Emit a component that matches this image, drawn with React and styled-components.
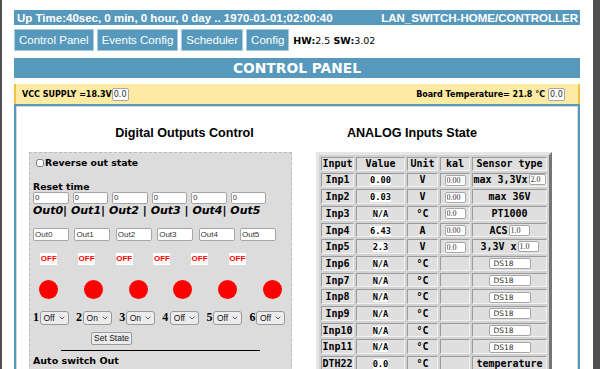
import React from "react";
import styled, { createGlobalStyle } from "styled-components";
import { ChevronDown } from "lucide-react";

const GlobalStyle = createGlobalStyle`
  html, body { margin: 0; padding: 0; background: #fff; }
  body { font-family: "DejaVu Sans", Verdana, sans-serif; color: #000; }
  * { box-sizing: border-box; }
`;

const BLUE = "#5799bc";

const Screen = styled.div`
  display: flex;
  width: 600px;
  height: 369px;
  overflow: hidden;
`;
const Edge = styled.div`
  flex: none;
  width: ${(p) => p.$w}px;
  background: #505050;
`;
const Page = styled.div`
  flex: 1;
  min-width: 0;
  padding: 10px 13px 0 12px;
`;

const TopBar = styled.div`
  display: flex;
  justify-content: space-between;
  align-items: center;
  height: 15px;
  padding: 0 2px 0 3px;
  background: ${BLUE};
  color: #fff;
  font: bold 11.5px "Liberation Sans", Arial, sans-serif;
  white-space: nowrap;
`;

const Nav = styled.div`
  display: flex;
  align-items: center;
  gap: 3px;
  margin-top: 4px;
  height: 22px;
`;
const NavButton = styled.a`
  display: flex;
  align-items: center;
  height: 22px;
  padding: 0 4px;
  background: ${BLUE};
  border: 1px solid #a9cce0;
  color: #fff;
  font: 11.5px "Liberation Sans", Arial, sans-serif;
  white-space: nowrap;
`;
const Version = styled.span`
  margin-left: 1px;
  font-size: 9.5px;
  b { font-weight: bold; }
`;

const TitleBar = styled.div`
  margin-top: 7px;
  height: 20px;
  background: ${BLUE};
  color: #fff;
  text-align: center;
  font: bold 13.8px/20px "DejaVu Sans", Verdana, sans-serif;
`;

const SupplyBar = styled.div`
  display: flex;
  justify-content: space-between;
  align-items: center;
  margin-top: 6px;
  height: 20px;
  padding: 0 13px 0 6px;
  background: #feeba3;
  border-left: 2px solid #f0c441;
  border-right: 2px solid #f0c441;
  font: bold 8px "DejaVu Sans", Verdana, sans-serif;
  white-space: nowrap;
`;
const Reading = styled.span`
  display: flex;
  align-items: center;
  gap: ${(p) => p.$gap || 0}px;
`;
const SmallField = styled.input`
  flex: none;
  width: ${(p) => p.$w || 17}px;
  height: ${(p) => p.$h || 13}px;
  padding: 0 1px;
  margin: 0;
  border: 1px solid #a6a6a6;
  border-radius: 2px;
  background: #fff;
  color: #333;
  font: ${(p) => p.$font || '8px "DejaVu Sans", sans-serif'};
  text-align: ${(p) => p.$align || "left"};
  outline: none;
`;

const Frame = styled.div`
  border: 2px solid ${BLUE};
  border-bottom: none;
  height: 300px;
`;
const Inner = styled.div`
  display: grid;
  grid-template-columns: 263px 236px;
  column-gap: 24px;
  align-items: start;
  height: 100%;
  padding-left: 12px;
  border: 1px solid #d6d6d6;
  border-bottom: none;
`;
const Column = styled.div`
  display: flex;
  flex-direction: column;
`;
const Heading = styled.h3`
  margin: 19px 0 11px;
  padding: ${(p) => p.$pad};
  text-align: center;
  font: bold 12.6px/15px "Liberation Sans", Arial, sans-serif;
`;

const OutPanel = styled.div`
  height: 240px;
  padding: 4px 3px 0;
  background: #dcdcdc;
  border: 1px dashed #bdbdbd;
`;
const CheckRow = styled.label`
  display: flex;
  align-items: center;
  height: 12px;
  font: bold 9.3px/12px "DejaVu Sans", Verdana, sans-serif;
  input {
    width: 8px;
    height: 8px;
    margin: 0 1px 0 3px;
  }
`;
const Label = styled.div`
  margin-top: ${(p) => p.$mt}px;
  font: bold 9.3px/10px "DejaVu Sans", Verdana, sans-serif;
`;
const FieldRow = styled.div`
  display: flex;
  gap: ${(p) => p.$gap}px;
  margin-top: ${(p) => p.$mt || 0}px;
`;
const OutNames = styled.div`
  margin-top: 1px;
  font: italic bold 11px/12px "DejaVu Sans", Verdana, sans-serif;
  white-space: pre;
`;
const StateRow = styled.div`
  display: flex;
  height: 12px;
  margin: 12.7px 0 0 -3px;
`;
const StateCell = styled.div`
  width: 37.7px;
  text-align: center;
  font: bold 8px/12px "Liberation Sans", Arial, sans-serif;
  span {
    display: inline-block;
    padding: 0 0.5px;
    background: #fff;
    color: #f00;
  }
`;
const LampRow = styled.div`
  display: flex;
  gap: 25.7px;
  margin-top: 15px;
  padding-left: 6.3px;
`;
const Lamp = styled.div`
  width: 19px;
  height: 19px;
  border-radius: 50%;
  background: ${(p) => (p.$on ? "#0c0" : "#f00")};
`;
const SwitchRow = styled.div`
  display: flex;
  gap: 7.6px;
  margin-top: 12px;
`;
const Switch = styled.div`
  display: flex;
  align-items: center;
  height: 13.5px;
  font: bold 12px "Liberation Serif", "Times New Roman", serif;
`;
const SelectBox = styled.span`
  display: flex;
  align-items: center;
  justify-content: space-between;
  width: 29px;
  height: 13.5px;
  margin-left: ${(p) => p.$ml}px;
  padding: 0 2px 0 3px;
  border: 1px solid #9a9a9a;
  border-radius: 3px;
  background: #ececee;
  color: #111;
  font: 8.5px "Liberation Sans", Arial, sans-serif;
`;
const SetButton = styled.button`
  width: 41px;
  height: 13px;
  margin: 7px 0 0 58px;
  padding: 0;
  border: 1px solid #9a9a9a;
  border-radius: 2px;
  background: #ececee;
  color: #111;
  font: 8.5px "Liberation Sans", Arial, sans-serif;
`;
const Rule = styled.div`
  width: 199px;
  height: 1px;
  margin: 4.5px 0 0 28px;
  background: #000;
`;
const SubTitle = styled.div`
  margin-top: 4.5px;
  font: bold 9.5px/12px "DejaVu Sans", Verdana, sans-serif;
`;

const Table = styled.table`
  width: 236px;
  margin-top: 0;
  table-layout: fixed;
  border-collapse: separate;
  border-spacing: 2px;
  border-style: solid;
  border-width: 3px;
  border-color: #e6e6e6 #757575 #757575 #e6e6e6;
  background: #d2d2d2;
  font: bold 10px "DejaVu Sans Mono", monospace;
`;
const Cell = styled.td`
  height: ${(p) => (p.$head ? 13.6 : 14.7)}px;
  padding: 0;
  border: 1px solid;
  border-color: #9c9c9c #f2f2f2 #f2f2f2 #9c9c9c;
  background: #dfdfdf;
  text-align: center;
  vertical-align: middle;
  white-space: nowrap;
  overflow: hidden;
`;
const Value = styled.span`
  background: #fff;
  font-size: 8.7px;
`;
const Inline = styled.span`
  display: inline-flex;
  align-items: center;
  gap: 1px;
`;

const rows = [
  { name: "Inp1", value: "0.00", unit: "V", kal: "0.00", type: ["max 3,3Vx", "2.0"] },
  { name: "Inp2", value: "0.03", unit: "V", kal: "0.00", type: ["max 36V"] },
  { name: "Inp3", value: "N/A", unit: "°C", kal: "0.0", type: ["PT1000"] },
  { name: "Inp4", value: "6.43", unit: "A", kal: "0.00", type: ["ACS", "1.0"] },
  { name: "Inp5", value: "2.3", unit: "V", kal: "0.0", type: ["3,3V x", "1.0"] },
  { name: "Inp6", value: "N/A", unit: "°C", ds: true },
  { name: "Inp7", value: "N/A", unit: "°C", ds: true },
  { name: "Inp8", value: "N/A", unit: "°C", ds: true },
  { name: "Inp9", value: "N/A", unit: "°C", ds: true },
  { name: "Inp10", value: "N/A", unit: "°C", ds: true },
  { name: "Inp11", value: "N/A", unit: "°C", ds: true },
  { name: "DTH22", value: "0.0", unit: "°C", type: ["temperature"] },
];

const outs = [0, 1, 2, 3, 4, 5];
const modes = ["Off", "On", "On", "Off", "Off", "Off"];
const serif = '8px "Liberation Serif", serif';

function SensorType({ row }) {
  if (row.ds) {
    return <SmallField $w={42} $h={11} defaultValue="DS18" $font='7.5px "DejaVu Sans", sans-serif' style={{ paddingLeft: 4 }} />;
  }
  if (row.type.length === 1) return row.type[0];
  const w = row.name === "Inp1" ? 17 : 21;
  return (
    <Inline>
      {row.type[0]}
      <SmallField $w={w} $h={11} defaultValue={row.type[1]} $font={serif} />
    </Inline>
  );
}

export default function App() {
  return (
    <Screen>
      <GlobalStyle />
      <Edge $w={2} />
      <Page>
        <TopBar>
          <span>Up Time:40sec, 0 min, 0 hour, 0 day .. 1970-01-01;02:00:40</span>
          <span>LAN_SWITCH-HOME/CONTROLLER</span>
        </TopBar>
        <Nav>
          <NavButton>Control Panel</NavButton>
          <NavButton>Events Config</NavButton>
          <NavButton>Scheduler</NavButton>
          <NavButton>Config</NavButton>
          <Version><b>HW:</b>2.5 <b>SW:</b>3.02</Version>
        </Nav>
        <TitleBar>CONTROL PANEL</TitleBar>
        <SupplyBar>
          <Reading>VCC SUPPLY =18.3V<SmallField defaultValue="0.0" /></Reading>
          <Reading $gap={3}>Board Temperature= 21.8 °C<SmallField defaultValue="0.0" /></Reading>
        </SupplyBar>
        <Frame>
          <Inner>
            <Column>
              <Heading $pad="0 0 0 48px">Digital Outputs Control</Heading>
              <OutPanel>
                <CheckRow><input type="checkbox" />Reverse out state</CheckRow>
                <Label $mt={12.5}>Reset time</Label>
                <FieldRow $gap={4}>
                  {outs.map((i) => (
                    <SmallField key={i} $w={35.5} $h={12} defaultValue="0" $font='8px "Liberation Sans", sans-serif' />
                  ))}
                </FieldRow>
                <OutNames>{"Out0| Out1| Out2 | Out3 | Out4| Out5"}</OutNames>
                <FieldRow $gap={5.4} $mt={11}>
                  {outs.map((i) => (
                    <SmallField key={i} $w={36} $h={13} defaultValue={`Out${i}`} $font='8px "Liberation Sans", sans-serif' />
                  ))}
                </FieldRow>
                <StateRow>
                  {outs.map((i) => (
                    <StateCell key={i}><span>OFF</span></StateCell>
                  ))}
                </StateRow>
                <LampRow>
                  {outs.map((i) => <Lamp key={i} />)}
                </LampRow>
                <SwitchRow>
                  {outs.map((i) => (
                    <Switch key={i}>
                      {i + 1}
                      <SelectBox $ml={i === 3 ? 1.5 : 0.5}>
                        {modes[i]}
                        <ChevronDown size={8} strokeWidth={2} />
                      </SelectBox>
                    </Switch>
                  ))}
                </SwitchRow>
                <SetButton>Set State</SetButton>
                <Rule />
                <SubTitle>Auto switch Out</SubTitle>
                <FieldRow $gap={30.8} $mt={2}>
                  {outs.map((i) => (
                    <SmallField key={i} $w={10} $h={10} />
                  ))}
                </FieldRow>
              </OutPanel>
            </Column>
            <Column>
              <Heading $pad="0 44px 0 0">ANALOG Inputs State</Heading>
              <Table>
                <colgroup>
                  <col style={{ width: 33 }} />
                  <col style={{ width: 49 }} />
                  <col style={{ width: 31 }} />
                  <col style={{ width: 30 }} />
                  <col style={{ width: 75 }} />
                </colgroup>
                <tbody>
                  <tr>
                    <Cell $head>Input</Cell>
                    <Cell $head>Value</Cell>
                    <Cell $head>Unit</Cell>
                    <Cell $head>kal</Cell>
                    <Cell $head>Sensor type</Cell>
                  </tr>
                  {rows.map((r) => (
                    <tr key={r.name}>
                      <Cell>{r.name}</Cell>
                      <Cell><Value>{r.value}</Value></Cell>
                      <Cell>{r.unit}</Cell>
                      <Cell>
                        {r.kal && <SmallField $w={21} $h={11} defaultValue={r.kal} $font={serif} />}
                      </Cell>
                      <Cell><SensorType row={r} /></Cell>
                    </tr>
                  ))}
                </tbody>
              </Table>
            </Column>
          </Inner>
        </Frame>
      </Page>
      <Edge $w={7} />
    </Screen>
  );
}
